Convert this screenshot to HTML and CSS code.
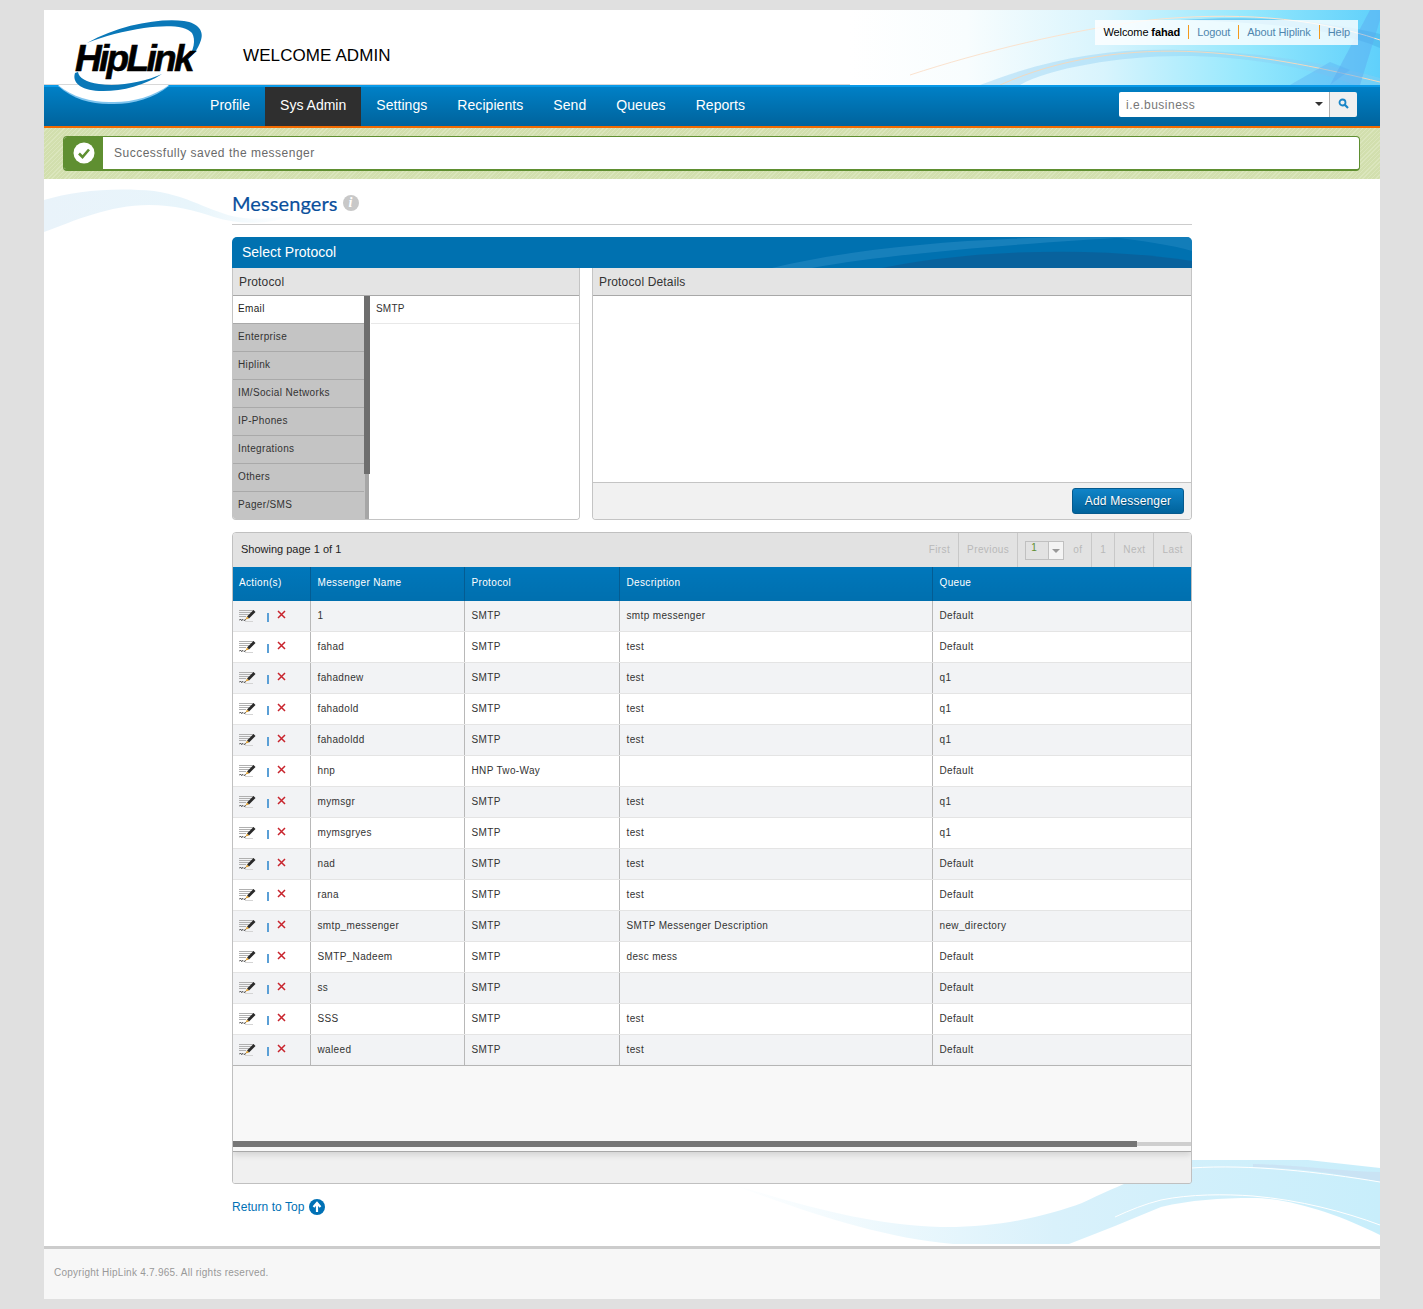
FILE: index.html
```html
<!DOCTYPE html>
<html lang="en">

<head>
    <meta charset="UTF-8">
    <title>Messengers</title>
    <link rel="stylesheet" href="styles.css">
</head>

<body>
    <svg class="icon-defs" width="0" height="0">
        <symbol id="edit" viewBox="0 0 17 12">
            <path d="M0 .5h15M0 2.500h13M0 4.500h10M0 6.500h7" stroke="#b0b0b0" stroke-width="1" fill="none"/>
            <path d="M0 10.500l1.500-1.500 1 1.500 1.500-1 1 1 2-1" stroke="#444" stroke-width="1" fill="none"/>
            <path d="M16.500 2L10 8.500 8 6.500 14.500 0z" fill="#2a2a2a"/>
            <path d="M8 6.500L10 8.500 6.500 9.500z" fill="#e0a030"/>
            <path d="M6 11.500h8" stroke="#d4d4d4" stroke-width="1"/>
        </symbol>
        <symbol id="del" viewBox="0 0 9 9">
            <path d="M1 1l7 7M8 1L1 8" stroke="#c8232c" stroke-width="1.500" fill="none"/>
        </symbol>
    </svg>

    <div class="page">
        <!-- logo sits over the header and the nav bar -->
        <div class="logo">
            <svg class="logo-swoosh" width="170" height="100" viewBox="0 0 170 100">
                <path d="M14 76C30 90 50 95 70 94C90 94 110 88 125 76z" fill="#7fc4ee"/>
                <path d="M14 75C30 88 50 93 70 92C90 92 110 86 125 75z" fill="#fff"/>
                <path d="M43 33C75 15 115 8 140 11C155 13 160 22 157 30C154 40 148 46 143 50C150 40 152 30 148 23C142 15 120 15 100 18C80 21 60 26 43 33z" fill="#0a78b8"/>
                <path d="M31 63C28 72 36 80 55 81C75 82 100 76 118 64C100 72 75 77 55 74C42 72 35 68 34 62z" fill="#0a78b8"/>
            </svg>
            <span class="logo-text">HipLink</span>
        </div>

        <div class="top">
            <svg class="top-art" width="530" height="75" viewBox="0 0 530 75" preserveAspectRatio="none">
                <defs>
                    <linearGradient id="sky" x1="0" y1="0" x2="1" y2="0">
                        <stop offset="0" stop-color="#fff"/>
                        <stop offset="0.22" stop-color="#f8fdfe"/>
                        <stop offset="0.48" stop-color="#d8f4fd"/>
                        <stop offset="0.75" stop-color="#95e8fd"/>
                        <stop offset="1" stop-color="#5fd0fb"/>
                    </linearGradient>
                </defs>
                <rect width="530" height="75" fill="url(#sky)"/>
                <path d="M130 75C200 48 260 38 330 40C420 42 480 55 530 68V75H505C460 58 400 46 330 46C270 46 200 58 170 75z" fill="#8bcdf2" opacity=".4"/>
                <path d="M330 10C420 4 490 14 530 24V38C490 20 420 12 330 10z" fill="#4ab2ea" opacity=".55"/>
                <path d="M60 65C130 42 220 20 300 10C380 2 460 6 530 30" stroke="#fbe3cf" stroke-width="1" fill="none"/>
                <path d="M150 75C210 48 280 38 350 42C420 46 480 60 530 72" stroke="#f0d9c0" stroke-width="1" fill="none"/>
                <path d="M480 75L520 0H530V10L510 75z" fill="#5aa9f0" opacity=".45"/>
                <path d="M440 75L480 52L500 60L480 75z" fill="#5aa9f0" opacity=".35"/>
            </svg>
            <h1 class="welcome">WELCOME ADMIN</h1>
            <div class="user-links">
                <span class="user-name">Welcome <b>fahad</b></span>
                <a href="#">Logout</a>
                <a href="#">About Hiplink</a>
                <a href="#">Help</a>
            </div>
        </div>

        <div class="nav">
            <ul class="nav-list">
                <li><a href="#">Profile</a></li>
                <li class="active"><a href="#">Sys Admin</a></li>
                <li><a href="#">Settings</a></li>
                <li><a href="#">Recipients</a></li>
                <li><a href="#">Send</a></li>
                <li><a href="#">Queues</a></li>
                <li><a href="#">Reports</a></li>
            </ul>
            <div class="search">
                <div class="search-input">
                    <span>i.e.business</span>
                    <i class="search-caret"></i>
                </div>
                <button class="search-btn">
                    <svg width="11" height="11" viewBox="0 0 11 11">
                        <circle cx="4.500" cy="4.500" r="3" stroke="#1a86c8" stroke-width="1.800" fill="none"/>
                        <path d="M6.800 6.800L10 10" stroke="#1a86c8" stroke-width="2.200"/>
                    </svg>
                </button>
            </div>
        </div>

        <div class="notice">
            <div class="notice-box">
                <div class="notice-icon">
                    <svg width="22" height="22" viewBox="0 0 22 22">
                        <circle cx="11" cy="11" r="10.500" fill="#fff"/>
                        <path d="M6 11.500l3.500 3.500L16 7.500" stroke="#5f8f31" stroke-width="2.600" fill="none"/>
                    </svg>
                </div>
                <div class="notice-text">Successfully saved the messenger</div>
            </div>
        </div>

        <div class="main">
            <svg class="wave-left" width="250" height="50" viewBox="0 0 250 50">
                <defs>
                    <linearGradient id="mist" x1="0" y1="0" x2="1" y2="0">
                        <stop offset="0" stop-color="#e9f3fa"/>
                        <stop offset="0.6" stop-color="#e8f5fb"/>
                        <stop offset="1" stop-color="#fff"/>
                    </linearGradient>
                </defs>
                <path d="M0 13C30 4 70 0 110 4C150 10 170 28 200 31C220 33 235 30 250 28C225 38 195 38 170 30C150 23 130 18 105 18C65 18 30 34 0 45z" fill="url(#mist)"/>
            </svg>
            <svg class="wave-right" width="660" height="86" viewBox="0 0 660 86">
                <defs>
                    <linearGradient id="foam" x1="0" y1="0" x2="1" y2="0">
                        <stop offset="0" stop-color="#fff"/>
                        <stop offset="0.5" stop-color="#d9f1fb"/>
                        <stop offset="1" stop-color="#c8eefb"/>
                    </linearGradient>
                </defs>
                <path d="M8 23C80 45 150 65 220 67C280 68 330 55 362 43C400 25 440 8 471 0H588L660 8V75C620 55 570 38 533 38C500 38 470 40 441 47C410 60 380 72 349 84H233C160 78 80 50 8 23z" fill="url(#foam)"/>
                <path d="M533 4C580 5 625 12 660 12V22C620 14 580 8 533 7z" fill="#c9e0f2" opacity=".8"/>
                <path d="M471 8C530 4 600 12 660 22" stroke="#fff" stroke-width="1" fill="none"/>
                <path d="M395 57C410 50 425 44 441 40C470 34 505 34 533 36C580 40 625 52 660 65" stroke="#fff" stroke-width="1" fill="none"/>
            </svg>

            <div class="content">
                <div class="title-row">
                    <h2 class="title">Messengers</h2>
                    <span class="info-icon">i</span>
                </div>

                <div class="section-bar">
                    <span>Select Protocol</span>
                    <svg class="section-art" width="420" height="31" viewBox="0 0 420 31">
                        <path d="M0 31C80 12 180 2 300 0H360C260 6 120 16 40 31z" fill="#2a8cc4" opacity=".55"/>
                        <path d="M110 31C190 14 320 8 420 24V31z" fill="#0a5f98" opacity=".8"/>
                        <path d="M340 0H420V14C400 8 370 4 340 0z" fill="#1e86c0" opacity=".6"/>
                    </svg>
                </div>

                <div class="panels">
                    <div class="panel panel-protocol">
                        <div class="panel-head">Protocol</div>
                        <div class="protocol-body">
                            <ul class="tabs">
                                <li class="selected">Email</li>
                                <li>Enterprise</li>
                                <li>Hiplink</li>
                                <li>IM/Social Networks</li>
                                <li>IP-Phones</li>
                                <li>Integrations</li>
                                <li>Others</li>
                                <li>Pager/SMS</li>
                            </ul>
                            <div class="tabs-scroll"><div class="tabs-thumb"></div></div>
                            <ul class="sub-list">
                                <li>SMTP</li>
                            </ul>
                        </div>
                    </div>
                    <div class="panel panel-details">
                        <div class="panel-head">Protocol Details</div>
                        <div class="details-body"></div>
                        <div class="details-foot">
                            <button class="btn-add">Add Messenger</button>
                        </div>
                    </div>
                </div>

                <div class="grid-box">
                    <div class="pager">
                        <div class="pager-info">Showing page 1 of 1</div>
                        <div class="pager-links">
                            <span>First</span>
                            <span>Previous</span>
                            <span class="pager-select"><i class="page-num">1</i><i class="page-arrow"></i></span>
                            <span class="pager-of">of</span>
                            <span>1</span>
                            <span>Next</span>
                            <span>Last</span>
                        </div>
                    </div>
                    <table class="grid">
                        <thead>
                            <tr>
                                <th class="col-action">Action(s)</th>
                                <th class="col-name">Messenger Name</th>
                                <th class="col-protocol">Protocol</th>
                                <th class="col-desc">Description</th>
                                <th>Queue</th>
                            </tr>
                        </thead>
                        <tbody>
                            <tr><td class="actions"><svg class="ic-edit"><use href="#edit"/></svg><i class="sep"></i><svg class="ic-del"><use href="#del"/></svg></td><td>1</td><td>SMTP</td><td>smtp messenger</td><td>Default</td></tr>
                            <tr><td class="actions"><svg class="ic-edit"><use href="#edit"/></svg><i class="sep"></i><svg class="ic-del"><use href="#del"/></svg></td><td>fahad</td><td>SMTP</td><td>test</td><td>Default</td></tr>
                            <tr><td class="actions"><svg class="ic-edit"><use href="#edit"/></svg><i class="sep"></i><svg class="ic-del"><use href="#del"/></svg></td><td>fahadnew</td><td>SMTP</td><td>test</td><td>q1</td></tr>
                            <tr><td class="actions"><svg class="ic-edit"><use href="#edit"/></svg><i class="sep"></i><svg class="ic-del"><use href="#del"/></svg></td><td>fahadold</td><td>SMTP</td><td>test</td><td>q1</td></tr>
                            <tr><td class="actions"><svg class="ic-edit"><use href="#edit"/></svg><i class="sep"></i><svg class="ic-del"><use href="#del"/></svg></td><td>fahadoldd</td><td>SMTP</td><td>test</td><td>q1</td></tr>
                            <tr><td class="actions"><svg class="ic-edit"><use href="#edit"/></svg><i class="sep"></i><svg class="ic-del"><use href="#del"/></svg></td><td>hnp</td><td>HNP Two-Way</td><td></td><td>Default</td></tr>
                            <tr><td class="actions"><svg class="ic-edit"><use href="#edit"/></svg><i class="sep"></i><svg class="ic-del"><use href="#del"/></svg></td><td>mymsgr</td><td>SMTP</td><td>test</td><td>q1</td></tr>
                            <tr><td class="actions"><svg class="ic-edit"><use href="#edit"/></svg><i class="sep"></i><svg class="ic-del"><use href="#del"/></svg></td><td>mymsgryes</td><td>SMTP</td><td>test</td><td>q1</td></tr>
                            <tr><td class="actions"><svg class="ic-edit"><use href="#edit"/></svg><i class="sep"></i><svg class="ic-del"><use href="#del"/></svg></td><td>nad</td><td>SMTP</td><td>test</td><td>Default</td></tr>
                            <tr><td class="actions"><svg class="ic-edit"><use href="#edit"/></svg><i class="sep"></i><svg class="ic-del"><use href="#del"/></svg></td><td>rana</td><td>SMTP</td><td>test</td><td>Default</td></tr>
                            <tr><td class="actions"><svg class="ic-edit"><use href="#edit"/></svg><i class="sep"></i><svg class="ic-del"><use href="#del"/></svg></td><td>smtp_messenger</td><td>SMTP</td><td>SMTP Messenger Description</td><td>new_directory</td></tr>
                            <tr><td class="actions"><svg class="ic-edit"><use href="#edit"/></svg><i class="sep"></i><svg class="ic-del"><use href="#del"/></svg></td><td>SMTP_Nadeem</td><td>SMTP</td><td>desc mess</td><td>Default</td></tr>
                            <tr><td class="actions"><svg class="ic-edit"><use href="#edit"/></svg><i class="sep"></i><svg class="ic-del"><use href="#del"/></svg></td><td>ss</td><td>SMTP</td><td></td><td>Default</td></tr>
                            <tr><td class="actions"><svg class="ic-edit"><use href="#edit"/></svg><i class="sep"></i><svg class="ic-del"><use href="#del"/></svg></td><td>SSS</td><td>SMTP</td><td>test</td><td>Default</td></tr>
                            <tr><td class="actions"><svg class="ic-edit"><use href="#edit"/></svg><i class="sep"></i><svg class="ic-del"><use href="#del"/></svg></td><td>waleed</td><td>SMTP</td><td>test</td><td>Default</td></tr>
                        </tbody>
                    </table>
                    <div class="grid-empty">
                        <div class="grid-scroll"><div class="grid-thumb"></div></div>
                    </div>
                    <div class="grid-foot"></div>
                </div>

                <a class="to-top" href="#">
                    Return to Top
                    <svg width="16" height="16" viewBox="0 0 16 16">
                        <circle cx="8" cy="8" r="8" fill="#0071b5"/>
                        <path d="M8 13V5M4.500 8L8 4l3.500 4" stroke="#fff" stroke-width="2.200" fill="none"/>
                    </svg>
                </a>
            </div>
        </div>

        <div class="footer">Copyright HipLink 4.7.965. All rights reserved.</div>
    </div>
</body>

</html>
```

FILE: styles.css
```css
body {
    margin: 0;
    padding: 10px 0;
    background: #e0e0e0;
    font-family: "Liberation Sans", Arial, sans-serif;
    font-size: 12px;
    color: #333;
}

a {
    text-decoration: none;
}

ul {
    margin: 0;
    padding: 0;
    list-style: none;
}

.icon-defs {
    position: absolute;
}

.page {
    position: relative;
    width: 1336px;
    margin-left: 44px;
    background: #fff;
}

/* Logo */
.logo {
    position: absolute;
    top: 0;
    left: 0;
    width: 170px;
    height: 100px;
    z-index: 5;
}

.logo-swoosh {
    position: absolute;
    top: 0;
    left: 0;
}

.logo-text {
    position: absolute;
    top: 27px;
    left: 31px;
    font-size: 37px;
    line-height: 44px;
    font-weight: bold;
    font-style: italic;
    letter-spacing: -2.700px;
    color: #000;
    -webkit-text-stroke: 0.600px #000;
}

/* Header */
.top {
    position: relative;
    height: 75px;
    overflow: hidden;
}

.top-art {
    position: absolute;
    top: 0;
    right: 0;
}

.welcome {
    position: absolute;
    top: 35px;
    left: 199px;
    margin: 0;
    font-size: 17px;
    line-height: 21px;
    letter-spacing: 0.100px;
    font-weight: normal;
    color: #000;
}

.user-links {
    position: absolute;
    top: 10px;
    right: 22px;
    height: 25px;
    box-sizing: border-box;
    display: flex;
    align-items: center;
    padding: 0 8px 2px;
    background: rgba(255, 255, 255, 0.8);
    font-size: 11px;
    letter-spacing: -0.100px;
}

.user-name {
    padding-right: 8px;
    color: #000;
}

.user-links a {
    padding: 0 8px;
    border-left: 1px solid #f39a1e;
    color: #4f86ae;
    line-height: 14px;
}

.user-links a:last-child {
    padding-right: 0;
}

/* Nav bar */
.nav {
    display: flex;
    justify-content: space-between;
    height: 43px;
    box-sizing: border-box;
    padding: 0 23px 0 151px;
    border-top: 2px solid #0a9ae8;
    border-bottom: 2px solid #f26a00;
    background: linear-gradient(#0080c6, #00639c);
    box-shadow: 0 -1px 0 #d8d8d8;
}

.nav-list {
    display: flex;
}

.nav-list a {
    display: block;
    padding: 0 15px;
    font-size: 14px;
    letter-spacing: 0.060px;
    line-height: 37px;
    color: #fff;
}

.nav-list .active {
    background: #2f2f2f;
}

.nav-list .active a {
    letter-spacing: 0;
}

.search {
    display: flex;
    height: 25px;
    margin-top: 5px;
    border-radius: 2px;
    overflow: hidden;
}

.search-input {
    display: flex;
    align-items: center;
    justify-content: space-between;
    width: 211px;
    box-sizing: border-box;
    padding: 0 6px 0 7px;
    background: #fff;
    border-right: 1px solid #b0b0b0;
    font-size: 12px;
    letter-spacing: 0.500px;
    color: #777;
}

.search-caret {
    width: 0;
    height: 0;
    border-style: solid;
    border-width: 4px 4px 0 4px;
    border-color: #333 transparent transparent transparent;
    margin-bottom: 2px;
}

.search-btn {
    width: 27px;
    padding: 0;
    border: 0;
    background: #f0f0f0;
}

/* Success message */
.notice {
    height: 51px;
    box-sizing: border-box;
    padding: 8px 20px 8px 19px;
    background: repeating-linear-gradient(135deg, #d2dfae 0, #d2dfae 2px, #dbe6bd 2px, #dbe6bd 3px);
}

.notice-box {
    display: flex;
    height: 35px;
    box-sizing: border-box;
    border: 1px solid #5f8f31;
    border-bottom-width: 2px;
    border-radius: 4px;
    background: #fff;
    overflow: hidden;
}

.notice-icon {
    display: flex;
    align-items: center;
    justify-content: center;
    width: 39px;
    background: #5f8f31;
}

.notice-text {
    padding-left: 11px;
    font-size: 12px;
    letter-spacing: 0.500px;
    line-height: 33px;
    color: #6a6a6a;
}

/* Main */
.main {
    position: relative;
    height: 1067px;
}

.wave-left {
    position: absolute;
    top: 8px;
    left: 0;
}

.wave-right {
    position: absolute;
    bottom: 0;
    right: 0;
}

.content {
    position: relative;
    width: 960px;
    margin-left: 188px;
}

.title-row {
    display: flex;
    align-items: center;
    height: 46px;
    box-sizing: border-box;
    padding-top: 2px;
    border-bottom: 1px solid #ccc;
}

.title {
    margin: 0;
    font-family: "Lato", sans-serif;
    font-size: 20px;
    font-weight: normal;
    letter-spacing: 0.100px;
    color: #0a4f9c;
    -webkit-text-stroke: 0.200px #0a4f9c;
}

.info-icon {
    width: 16px;
    height: 16px;
    margin: 0 0 0 5px;
    border-radius: 50%;
    background: #c8c8c8;
    font-family: "Liberation Serif", serif;
    font-style: italic;
    font-weight: bold;
    font-size: 14px;
    line-height: 16px;
    text-align: center;
    color: #fff;
}

.section-bar {
    position: relative;
    height: 31px;
    margin-top: 12px;
    padding-left: 10px;
    border-radius: 5px 5px 0 0;
    background: #0071b0;
    font-size: 14px;
    line-height: 31px;
    color: #fff;
    overflow: hidden;
}

.section-art {
    position: absolute;
    top: 0;
    right: 0;
}

.panels {
    display: flex;
    gap: 12px;
    height: 252px;
}

.panel {
    display: flex;
    flex-direction: column;
    box-sizing: border-box;
    border: 1px solid #c4c4c4;
    border-top: 0;
    border-radius: 0 0 4px 4px;
    overflow: hidden;
}

.panel-protocol {
    width: 348px;
}

.panel-details {
    width: 600px;
}

.panel-head {
    height: 28px;
    box-sizing: border-box;
    padding-left: 6px;
    border-bottom: 1px solid #a8a8a8;
    background: #e4e4e4;
    font-size: 12px;
    letter-spacing: 0.150px;
    line-height: 29px;
}

.protocol-body {
    display: flex;
    flex: 1;
    min-height: 0;
}

.tabs {
    width: 131px;
    background: #c4c4c4;
}

.tabs li {
    height: 28px;
    box-sizing: border-box;
    padding-left: 5px;
    border-bottom: 1px solid #a9a9a9;
    font-size: 10px;
    letter-spacing: 0.350px;
    line-height: 26px;
}

.tabs .selected {
    background: #fff;
    color: #222;
}

.tabs-scroll {
    width: 7px;
    background: linear-gradient(to right, #c4c4c4 1px, #a6a6a6 1px, #a6a6a6 5px, #fff 5px);
}

.tabs-thumb {
    width: 6px;
    height: 178px;
    background: #6e6e6e;
}

.sub-list {
    flex: 1;
    background: #fff;
}

.sub-list li {
    height: 28px;
    box-sizing: border-box;
    padding-left: 5px;
    border-bottom: 1px solid #e8e8e8;
    font-size: 10px;
    letter-spacing: 0.200px;
    line-height: 26px;
}

.details-body {
    flex: 1;
    background: #fff;
}

.details-foot {
    display: flex;
    justify-content: flex-end;
    align-items: center;
    height: 37px;
    box-sizing: border-box;
    padding-right: 7px;
    border-top: 1px solid #c4c4c4;
    background: #f1f1f1;
}

.btn-add {
    width: 112px;
    height: 26px;
    padding: 0;
    border: 1px solid #055a8e;
    border-radius: 3px;
    background: linear-gradient(#1184c8, #00639c);
    font-family: inherit;
    font-size: 12px;
    letter-spacing: 0.200px;
    color: #fff;
    text-shadow: 0 1px 1px rgba(0, 0, 0, 0.4);
}

/* Messenger grid */
.grid-box {
    margin-top: 12px;
    border: 1px solid #c0c0c0;
    border-radius: 4px 4px 3px 3px;
    overflow: hidden;
}

.pager {
    display: flex;
    justify-content: space-between;
    align-items: stretch;
    height: 34px;
    padding-left: 8px;
    background: #e2e2e2;
}

.pager-info {
    font-size: 11px;
    line-height: 32px;
    color: #222;
}

.pager-links {
    display: flex;
    font-size: 10px;
    letter-spacing: 0.400px;
    line-height: 34px;
    color: #b9b9b9;
}

.pager-links span {
    padding: 0 8px;
    border-left: 1px solid #c8c8c8;
}

.pager-links span:first-child {
    border-left: 0;
}

.pager-links .pager-select {
    display: flex;
    align-items: center;
    padding: 0 0 0 7px;
}

.pager-links .pager-of {
    padding: 0 9px;
    border-left: 0;
}

.page-num {
    width: 23px;
    height: 19px;
    box-sizing: border-box;
    padding-left: 5px;
    border: 1px solid #c0c0c0;
    border-right: 0;
    font-style: normal;
    line-height: 12px;
    color: #5f8f31;
}

.page-arrow {
    position: relative;
    width: 16px;
    height: 19px;
    box-sizing: border-box;
    border: 1px solid #c0c0c0;
    background: #f4f4f4;
}

.page-arrow::after {
    content: '';
    position: absolute;
    top: 7px;
    left: 3px;
    border-style: solid;
    border-width: 4px 4px 0 4px;
    border-color: #999 transparent transparent transparent;
}

.grid {
    width: 100%;
    table-layout: fixed;
    border-collapse: collapse;
    font-size: 10px;
}

.col-action {
    width: 77px;
}

.col-name {
    width: 154px;
}

.col-protocol {
    width: 155px;
}

.col-desc {
    width: 313px;
}

.grid th {
    box-sizing: border-box;
    height: 34px;
    padding: 0 0 4px 7px;
    border-left: 1px solid #045c92;
    background: linear-gradient(#0077bb, #006fae);
    font-weight: normal;
    letter-spacing: 0.350px;
    text-align: left;
    color: #fff;
}

.grid th:first-child {
    padding-left: 6px;
}

.grid th:first-child,
.grid td:first-child {
    border-left: 0;
}

.grid td {
    height: 28px;
    padding: 0 0 2px 7px;
    border-left: 1px solid #b8b8b8;
    border-bottom: 1px solid #e4e4e4;
    letter-spacing: 0.350px;
    color: #333;
}

.grid tbody tr:nth-child(odd) td {
    background: #f2f3f5;
}

.grid tbody tr:last-child td {
    border-bottom: 1px solid #b8b8b8;
}

.grid td.actions {
    height: 30px;
    padding: 0 0 0 6px;
    line-height: 0;
}

.ic-edit {
    width: 17px;
    height: 12px;
    vertical-align: -2px;
}

.sep {
    display: inline-block;
    width: 2px;
    height: 9px;
    margin: 0 8px 0 11px;
    vertical-align: -2px;
    background: #5a9fd6;
}

.ic-del {
    width: 9px;
    height: 9px;
    vertical-align: 1px;
}

.grid-empty {
    position: relative;
    display: flex;
    align-items: flex-end;
    height: 86px;
    box-sizing: border-box;
    padding-bottom: 5px;
    border-bottom: 1px solid #a8a8a8;
    background: #f8f8f8;
    box-shadow: 0 3px 6px rgba(0, 0, 0, 0.12);
}

.grid-scroll {
    position: relative;
    width: 100%;
    height: 4px;
    background: #cfcfcf;
}

.grid-thumb {
    position: absolute;
    top: -1px;
    left: 0;
    width: 904px;
    height: 6px;
    background: #767676;
}

.grid-foot {
    height: 31px;
    background: #f0f0f0;
}

.to-top {
    display: flex;
    align-items: center;
    gap: 5px;
    margin-top: 15px;
    font-size: 12px;
    letter-spacing: 0.050px;
    color: #0071b5;
}

.footer {
    height: 53px;
    box-sizing: border-box;
    padding: 18px 0 0 10px;
    border-top: 3px solid #ccc;
    background: #f7f7f7;
    font-size: 10px;
    letter-spacing: 0.250px;
    line-height: 12px;
    color: #999;
}
```
